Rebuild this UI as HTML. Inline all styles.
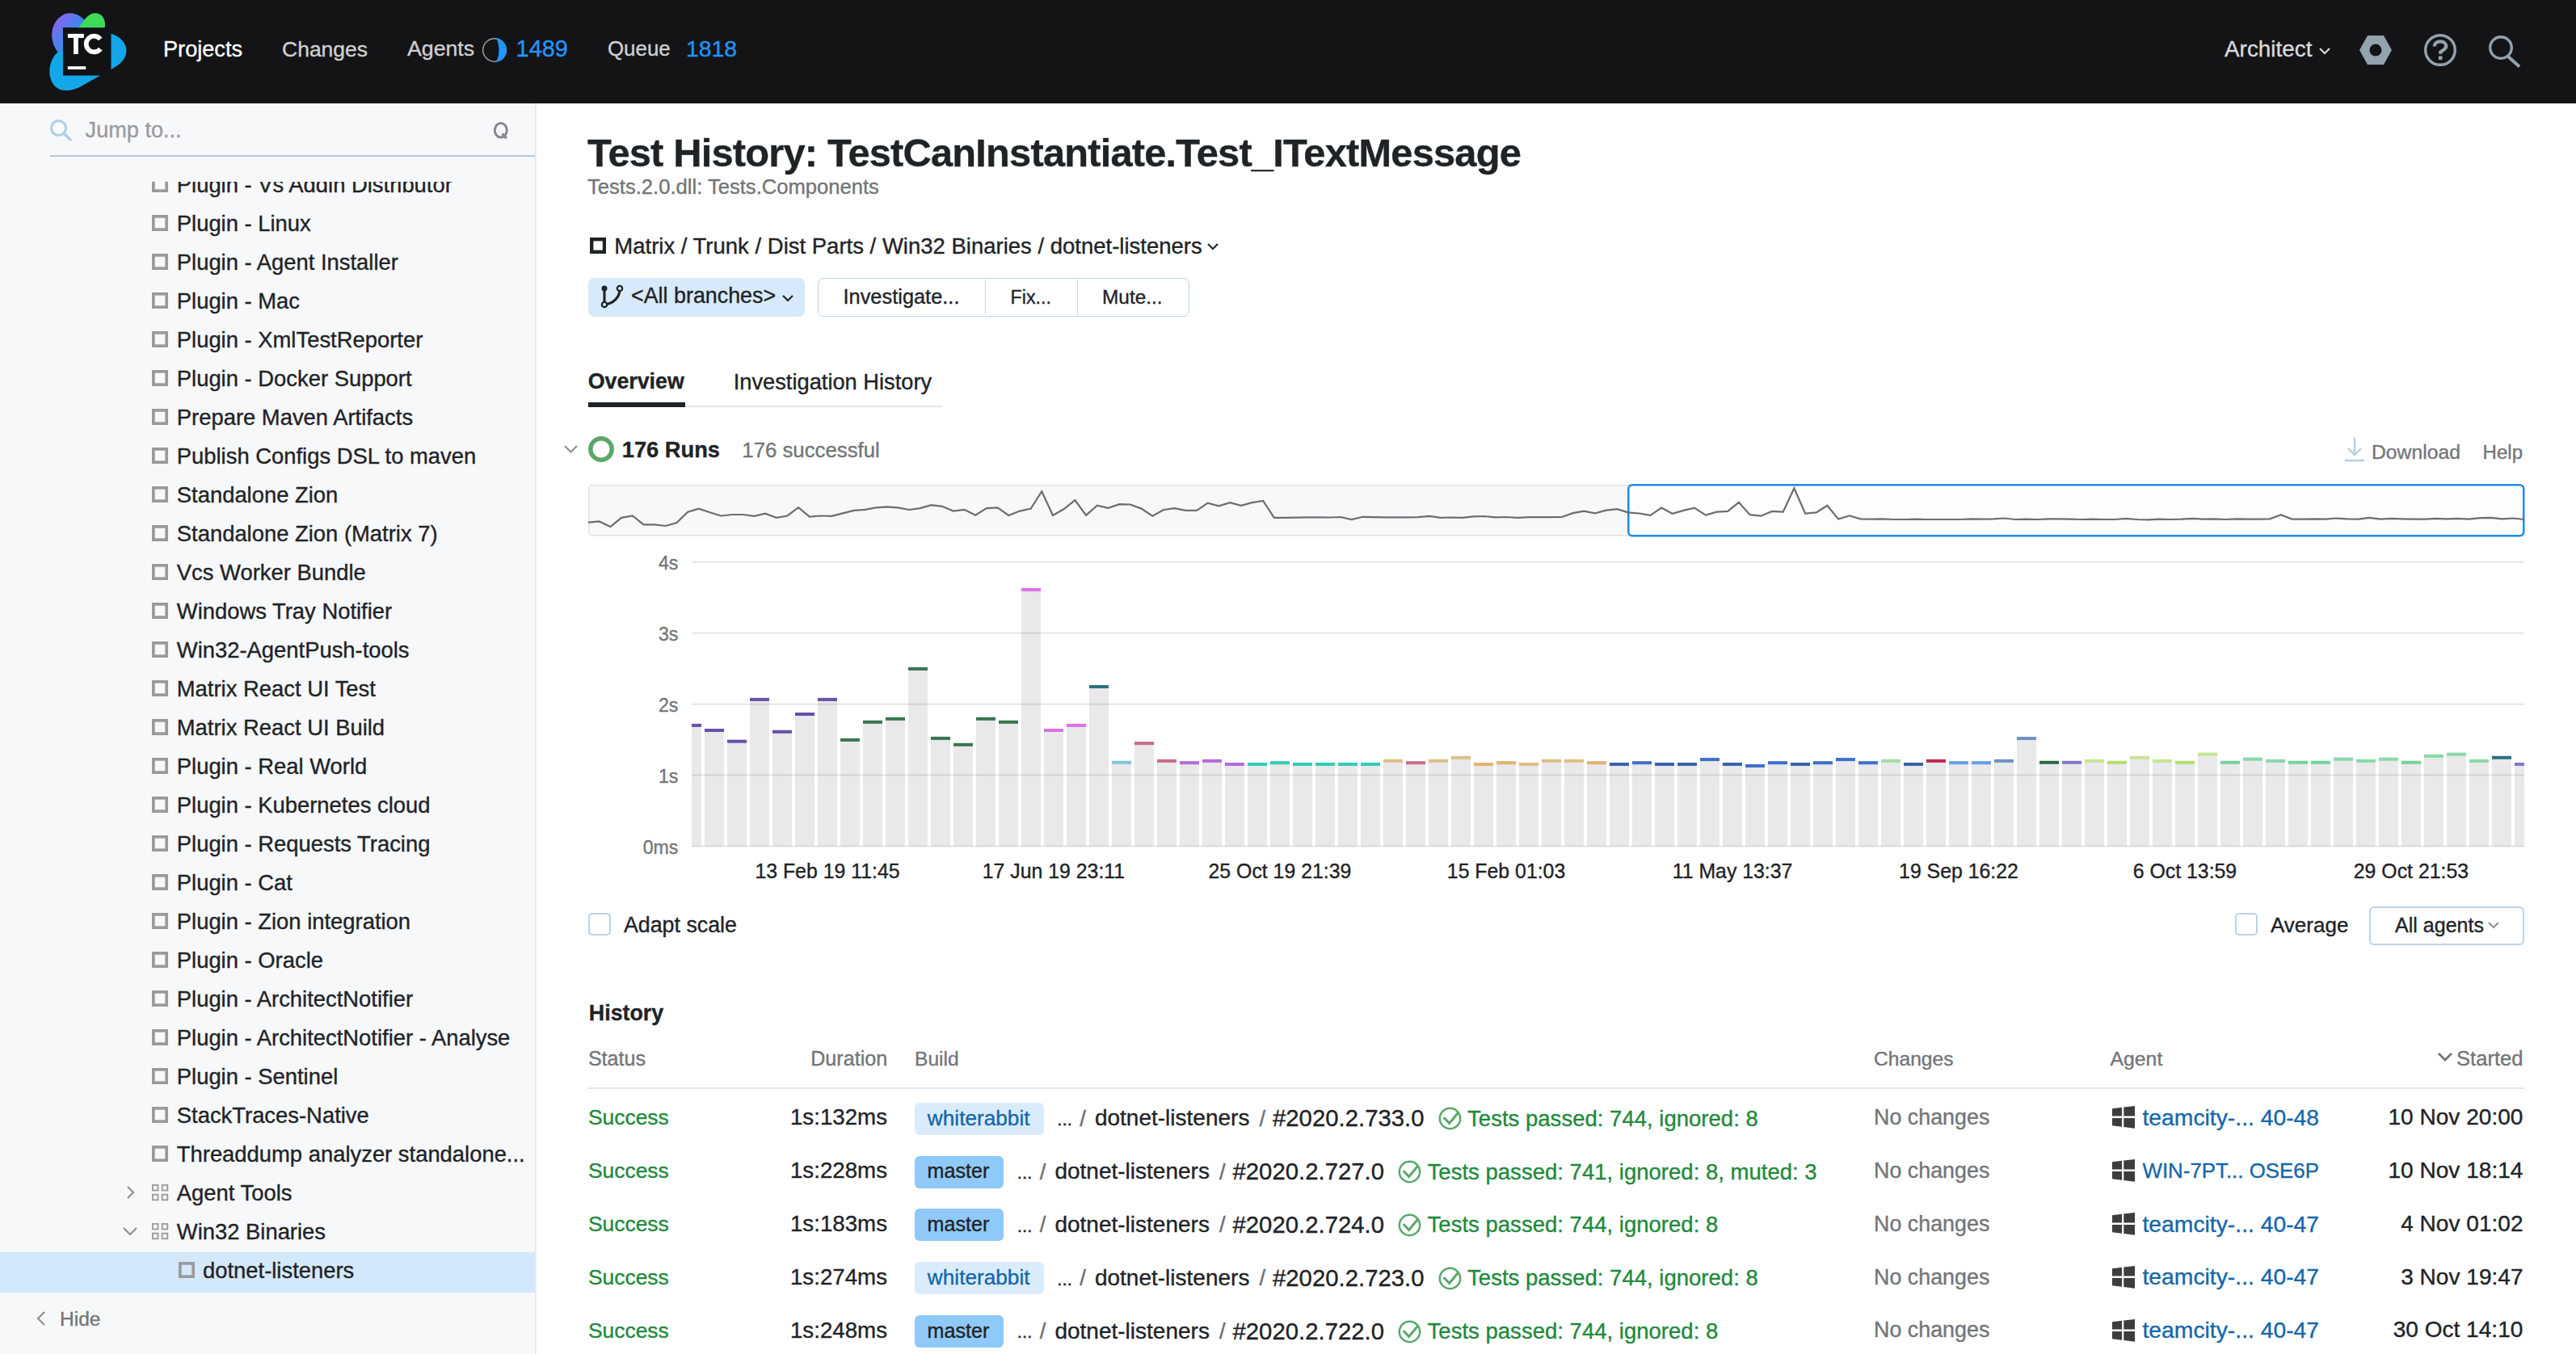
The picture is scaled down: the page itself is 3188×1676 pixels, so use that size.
<!DOCTYPE html>
<html><head><meta charset="utf-8"><style>
html,body{margin:0;padding:0;width:3188px;height:1676px;overflow:hidden;background:#ffffff;position:relative}
.t{position:absolute;white-space:nowrap;font-family:"Liberation Sans",sans-serif;-webkit-text-stroke:0.35px currentColor}
svg{display:block}
</style></head><body>
<div style="position:absolute;left:0px;top:0px;width:3188px;height:128px;background:#141417"></div>
<svg style="position:absolute;left:40px;top:0px" width="140" height="127" viewBox="0 0 140 127">
<defs><linearGradient id="lg1" x1="0" y1="0" x2="1" y2="1"><stop offset="0" stop-color="#a35ae8"/><stop offset="0.55" stop-color="#3b87f0"/><stop offset="1" stop-color="#19a0ec"/></linearGradient></defs>
<g transform="scale(0.09377 0.0938)">
<path d="M340 690 C230 560 210 300 420 190 C540 140 650 210 720 300 L640 365 L405 365 L405 700 Z" fill="url(#lg1)"/>
<path d="M610 370 C680 260 740 172 830 172 C935 172 975 280 955 370 Z" fill="#3ddc58"/>
<path d="M345 680 C220 780 180 1010 300 1140 C400 1235 560 1190 660 1130 L900 995 L405 995 L405 680 Z" fill="#12a7e8"/>
<path d="M1040 445 C1190 490 1265 610 1235 720 C1205 820 1110 880 1040 915 Z" fill="#12a7e8"/>
<rect x="405" y="365" width="620" height="630" fill="#121214"/>
</g>
<rect x="43.8" y="41.9" width="20.1" height="5" fill="#fff"/>
<rect x="51" y="41.9" width="5.8" height="25.1" fill="#fff"/>
<path d="M84.22 48.47 A9.8 9.8 0 1 0 84.33 60.4" fill="none" stroke="#fff" stroke-width="5.8"/>
<rect x="43.8" y="82.1" width="22.4" height="3.8" fill="#fff"/>
</svg>
<div class="t" style="left:202.00px;top:47.02px;font-size:27.15px;line-height:27.15px;font-weight:400;color:#ffffff;">Projects</div>
<div class="t" style="left:349.00px;top:47.57px;font-size:26.5px;line-height:26.5px;font-weight:400;color:#cfd0d3;">Changes</div>
<div class="t" style="left:504.00px;top:47.41px;font-size:26.69px;line-height:26.69px;font-weight:400;color:#cfd0d3;">Agents</div>
<svg style="position:absolute;left:596px;top:46px" width="32" height="32" viewBox="0 0 32 32"><circle cx="16" cy="16" r="14.3" fill="none" stroke="#a3a3a6" stroke-width="1.4"/><path d="M16 1 A15 15 0 0 1 16 31 A5.5 15 0 0 0 16 1 Z" fill="#2196f8"/></svg>
<div class="t" style="left:638.60px;top:45.60px;font-size:28.83px;line-height:28.83px;font-weight:400;color:#2196f8;">1489</div>
<div class="t" style="left:752.00px;top:48.10px;font-size:25.87px;line-height:25.87px;font-weight:400;color:#cfd0d3;">Queue</div>
<div class="t" style="left:849.00px;top:45.98px;font-size:28.38px;line-height:28.38px;font-weight:400;color:#2196f8;">1818</div>
<div class="t" style="left:2753.00px;top:47.39px;font-size:27.89px;line-height:27.89px;font-weight:400;color:#d9dadc;">Architect</div>
<svg style="position:absolute;left:2868px;top:56px" width="18" height="14" viewBox="0 0 18 14"><path d="M3 4 L9 10 L15 4" fill="none" stroke="#d9dadc" stroke-width="2.2"/></svg>
<svg style="position:absolute;left:2918px;top:42px" width="44" height="40" viewBox="0 0 44 40"><path d="M12 2 H32 L42 20 L32 38 H12 L2 20 Z" fill="#93a2ad"/><circle cx="22" cy="20" r="7.5" fill="#141416"/></svg>
<svg style="position:absolute;left:2998px;top:41px" width="44" height="44" viewBox="0 0 44 44"><circle cx="22" cy="21" r="18.3" fill="none" stroke="#93a2ad" stroke-width="3.4"/><path d="M14.8 16.6 C14.8 12.6 18 10.3 22.1 10.3 C26.3 10.3 29.3 13 29.3 16.3 C29.3 20 24.6 21.2 22.3 23.5 V25.8" fill="none" stroke="#93a2ad" stroke-width="4.3"/><rect x="19.9" y="28.4" width="4.6" height="4.6" fill="#93a2ad"/></svg>
<svg style="position:absolute;left:3076px;top:41px" width="46" height="46" viewBox="0 0 46 46"><circle cx="19" cy="18" r="13.3" fill="none" stroke="#93a2ad" stroke-width="3.4"/><path d="M28 29 L42 41.5" stroke="#93a2ad" stroke-width="4"/></svg>
<div style="position:absolute;left:0px;top:128px;width:662px;height:1548px;background:#f7f8fa"></div>
<div style="position:absolute;left:662px;top:128px;width:2px;height:1548px;background:#e9eaec"></div>
<svg style="position:absolute;left:60px;top:146px" width="32" height="32" viewBox="0 0 32 32"><circle cx="12.5" cy="12.5" r="9" fill="none" stroke="#b0cde5" stroke-width="3"/><path d="M19 19 L28 28" stroke="#b0cde5" stroke-width="3.5"/></svg>
<div class="t" style="left:105.60px;top:146.85px;font-size:27.11px;line-height:27.11px;font-weight:400;color:#9a9ba0;">Jump to...</div>
<svg style="position:absolute;left:608px;top:148px" width="24" height="28" viewBox="0 0 24 28"><ellipse cx="11.8" cy="13.2" rx="7.5" ry="8.8" fill="none" stroke="#88898e" stroke-width="3"/><path d="M13.5 17.5 L18.8 23.2" stroke="#88898e" stroke-width="3.2"/></svg>
<div style="position:absolute;left:62px;top:192px;width:600px;height:2px;background:#b3c8db"></div>
<div style="position:absolute;left:0;top:225px;width:662px;height:1451px;overflow:hidden">
<div style="position:absolute;left:0px;top:1325px;width:662px;height:50px;background:#d4e8fb"></div>
<svg style="position:absolute;left:188px;top:-7px" width="20" height="20" viewBox="0 0 20 20"><rect x="1.85" y="1.85" width="16.3" height="16.3" fill="none" stroke="#9a9a9c" stroke-width="3.7"/></svg>
<div class="t" style="left:218.80px;top:-10.24px;font-size:27.4px;line-height:27.4px;font-weight:400;color:#1f2326;">Plugin - Vs Addin Distributor</div>
<svg style="position:absolute;left:188px;top:41px" width="20" height="20" viewBox="0 0 20 20"><rect x="1.85" y="1.85" width="16.3" height="16.3" fill="none" stroke="#9a9a9c" stroke-width="3.7"/></svg>
<div class="t" style="left:218.80px;top:37.76px;font-size:27.4px;line-height:27.4px;font-weight:400;color:#1f2326;">Plugin - Linux</div>
<svg style="position:absolute;left:188px;top:89px" width="20" height="20" viewBox="0 0 20 20"><rect x="1.85" y="1.85" width="16.3" height="16.3" fill="none" stroke="#9a9a9c" stroke-width="3.7"/></svg>
<div class="t" style="left:218.80px;top:85.76px;font-size:27.4px;line-height:27.4px;font-weight:400;color:#1f2326;">Plugin - Agent Installer</div>
<svg style="position:absolute;left:188px;top:137px" width="20" height="20" viewBox="0 0 20 20"><rect x="1.85" y="1.85" width="16.3" height="16.3" fill="none" stroke="#9a9a9c" stroke-width="3.7"/></svg>
<div class="t" style="left:218.80px;top:133.76px;font-size:27.4px;line-height:27.4px;font-weight:400;color:#1f2326;">Plugin - Mac</div>
<svg style="position:absolute;left:188px;top:185px" width="20" height="20" viewBox="0 0 20 20"><rect x="1.85" y="1.85" width="16.3" height="16.3" fill="none" stroke="#9a9a9c" stroke-width="3.7"/></svg>
<div class="t" style="left:218.80px;top:181.76px;font-size:27.4px;line-height:27.4px;font-weight:400;color:#1f2326;">Plugin - XmlTestReporter</div>
<svg style="position:absolute;left:188px;top:233px" width="20" height="20" viewBox="0 0 20 20"><rect x="1.85" y="1.85" width="16.3" height="16.3" fill="none" stroke="#9a9a9c" stroke-width="3.7"/></svg>
<div class="t" style="left:218.80px;top:229.76px;font-size:27.4px;line-height:27.4px;font-weight:400;color:#1f2326;">Plugin - Docker Support</div>
<svg style="position:absolute;left:188px;top:281px" width="20" height="20" viewBox="0 0 20 20"><rect x="1.85" y="1.85" width="16.3" height="16.3" fill="none" stroke="#9a9a9c" stroke-width="3.7"/></svg>
<div class="t" style="left:218.80px;top:277.76px;font-size:27.4px;line-height:27.4px;font-weight:400;color:#1f2326;">Prepare Maven Artifacts</div>
<svg style="position:absolute;left:188px;top:329px" width="20" height="20" viewBox="0 0 20 20"><rect x="1.85" y="1.85" width="16.3" height="16.3" fill="none" stroke="#9a9a9c" stroke-width="3.7"/></svg>
<div class="t" style="left:218.80px;top:325.76px;font-size:27.4px;line-height:27.4px;font-weight:400;color:#1f2326;">Publish Configs DSL to maven</div>
<svg style="position:absolute;left:188px;top:377px" width="20" height="20" viewBox="0 0 20 20"><rect x="1.85" y="1.85" width="16.3" height="16.3" fill="none" stroke="#9a9a9c" stroke-width="3.7"/></svg>
<div class="t" style="left:218.80px;top:373.76px;font-size:27.4px;line-height:27.4px;font-weight:400;color:#1f2326;">Standalone Zion</div>
<svg style="position:absolute;left:188px;top:425px" width="20" height="20" viewBox="0 0 20 20"><rect x="1.85" y="1.85" width="16.3" height="16.3" fill="none" stroke="#9a9a9c" stroke-width="3.7"/></svg>
<div class="t" style="left:218.80px;top:421.76px;font-size:27.4px;line-height:27.4px;font-weight:400;color:#1f2326;">Standalone Zion (Matrix 7)</div>
<svg style="position:absolute;left:188px;top:473px" width="20" height="20" viewBox="0 0 20 20"><rect x="1.85" y="1.85" width="16.3" height="16.3" fill="none" stroke="#9a9a9c" stroke-width="3.7"/></svg>
<div class="t" style="left:218.80px;top:469.76px;font-size:27.4px;line-height:27.4px;font-weight:400;color:#1f2326;">Vcs Worker Bundle</div>
<svg style="position:absolute;left:188px;top:521px" width="20" height="20" viewBox="0 0 20 20"><rect x="1.85" y="1.85" width="16.3" height="16.3" fill="none" stroke="#9a9a9c" stroke-width="3.7"/></svg>
<div class="t" style="left:218.80px;top:517.76px;font-size:27.4px;line-height:27.4px;font-weight:400;color:#1f2326;">Windows Tray Notifier</div>
<svg style="position:absolute;left:188px;top:569px" width="20" height="20" viewBox="0 0 20 20"><rect x="1.85" y="1.85" width="16.3" height="16.3" fill="none" stroke="#9a9a9c" stroke-width="3.7"/></svg>
<div class="t" style="left:218.80px;top:565.76px;font-size:27.4px;line-height:27.4px;font-weight:400;color:#1f2326;">Win32-AgentPush-tools</div>
<svg style="position:absolute;left:188px;top:617px" width="20" height="20" viewBox="0 0 20 20"><rect x="1.85" y="1.85" width="16.3" height="16.3" fill="none" stroke="#9a9a9c" stroke-width="3.7"/></svg>
<div class="t" style="left:218.80px;top:613.76px;font-size:27.4px;line-height:27.4px;font-weight:400;color:#1f2326;">Matrix React UI Test</div>
<svg style="position:absolute;left:188px;top:665px" width="20" height="20" viewBox="0 0 20 20"><rect x="1.85" y="1.85" width="16.3" height="16.3" fill="none" stroke="#9a9a9c" stroke-width="3.7"/></svg>
<div class="t" style="left:218.80px;top:661.76px;font-size:27.4px;line-height:27.4px;font-weight:400;color:#1f2326;">Matrix React UI Build</div>
<svg style="position:absolute;left:188px;top:713px" width="20" height="20" viewBox="0 0 20 20"><rect x="1.85" y="1.85" width="16.3" height="16.3" fill="none" stroke="#9a9a9c" stroke-width="3.7"/></svg>
<div class="t" style="left:218.80px;top:709.76px;font-size:27.4px;line-height:27.4px;font-weight:400;color:#1f2326;">Plugin - Real World</div>
<svg style="position:absolute;left:188px;top:761px" width="20" height="20" viewBox="0 0 20 20"><rect x="1.85" y="1.85" width="16.3" height="16.3" fill="none" stroke="#9a9a9c" stroke-width="3.7"/></svg>
<div class="t" style="left:218.80px;top:757.76px;font-size:27.4px;line-height:27.4px;font-weight:400;color:#1f2326;">Plugin - Kubernetes cloud</div>
<svg style="position:absolute;left:188px;top:809px" width="20" height="20" viewBox="0 0 20 20"><rect x="1.85" y="1.85" width="16.3" height="16.3" fill="none" stroke="#9a9a9c" stroke-width="3.7"/></svg>
<div class="t" style="left:218.80px;top:805.76px;font-size:27.4px;line-height:27.4px;font-weight:400;color:#1f2326;">Plugin - Requests Tracing</div>
<svg style="position:absolute;left:188px;top:857px" width="20" height="20" viewBox="0 0 20 20"><rect x="1.85" y="1.85" width="16.3" height="16.3" fill="none" stroke="#9a9a9c" stroke-width="3.7"/></svg>
<div class="t" style="left:218.80px;top:853.76px;font-size:27.4px;line-height:27.4px;font-weight:400;color:#1f2326;">Plugin - Cat</div>
<svg style="position:absolute;left:188px;top:905px" width="20" height="20" viewBox="0 0 20 20"><rect x="1.85" y="1.85" width="16.3" height="16.3" fill="none" stroke="#9a9a9c" stroke-width="3.7"/></svg>
<div class="t" style="left:218.80px;top:901.76px;font-size:27.4px;line-height:27.4px;font-weight:400;color:#1f2326;">Plugin - Zion integration</div>
<svg style="position:absolute;left:188px;top:953px" width="20" height="20" viewBox="0 0 20 20"><rect x="1.85" y="1.85" width="16.3" height="16.3" fill="none" stroke="#9a9a9c" stroke-width="3.7"/></svg>
<div class="t" style="left:218.80px;top:949.76px;font-size:27.4px;line-height:27.4px;font-weight:400;color:#1f2326;">Plugin - Oracle</div>
<svg style="position:absolute;left:188px;top:1001px" width="20" height="20" viewBox="0 0 20 20"><rect x="1.85" y="1.85" width="16.3" height="16.3" fill="none" stroke="#9a9a9c" stroke-width="3.7"/></svg>
<div class="t" style="left:218.80px;top:997.76px;font-size:27.4px;line-height:27.4px;font-weight:400;color:#1f2326;">Plugin - ArchitectNotifier</div>
<svg style="position:absolute;left:188px;top:1049px" width="20" height="20" viewBox="0 0 20 20"><rect x="1.85" y="1.85" width="16.3" height="16.3" fill="none" stroke="#9a9a9c" stroke-width="3.7"/></svg>
<div class="t" style="left:218.80px;top:1045.76px;font-size:27.4px;line-height:27.4px;font-weight:400;color:#1f2326;">Plugin - ArchitectNotifier - Analyse</div>
<svg style="position:absolute;left:188px;top:1097px" width="20" height="20" viewBox="0 0 20 20"><rect x="1.85" y="1.85" width="16.3" height="16.3" fill="none" stroke="#9a9a9c" stroke-width="3.7"/></svg>
<div class="t" style="left:218.80px;top:1093.76px;font-size:27.4px;line-height:27.4px;font-weight:400;color:#1f2326;">Plugin - Sentinel</div>
<svg style="position:absolute;left:188px;top:1145px" width="20" height="20" viewBox="0 0 20 20"><rect x="1.85" y="1.85" width="16.3" height="16.3" fill="none" stroke="#9a9a9c" stroke-width="3.7"/></svg>
<div class="t" style="left:218.80px;top:1141.76px;font-size:27.4px;line-height:27.4px;font-weight:400;color:#1f2326;">StackTraces-Native</div>
<svg style="position:absolute;left:188px;top:1193px" width="20" height="20" viewBox="0 0 20 20"><rect x="1.85" y="1.85" width="16.3" height="16.3" fill="none" stroke="#9a9a9c" stroke-width="3.7"/></svg>
<div class="t" style="left:218.80px;top:1189.76px;font-size:27.4px;line-height:27.4px;font-weight:400;color:#1f2326;">Threaddump analyzer standalone...</div>
<svg style="position:absolute;left:152px;top:1241px" width="20" height="20" viewBox="0 0 20 20"><path d="M6 3 L13 10 L6 17" fill="none" stroke="#8f9092" stroke-width="2.2"/></svg>
<svg style="position:absolute;left:188px;top:1241px" width="21" height="21" viewBox="0 0 21 21"><g fill="none" stroke="#9a9a9c" stroke-width="1.8"><rect x="0.9" y="0.9" width="6.6" height="6.6"/><rect x="12.7" y="0.9" width="6.6" height="6.6"/><rect x="0.9" y="12.7" width="6.6" height="6.6"/><rect x="12.7" y="12.7" width="6.6" height="6.6"/></g></svg>
<div class="t" style="left:218.80px;top:1237.76px;font-size:27.4px;line-height:27.4px;font-weight:400;color:#1f2326;">Agent Tools</div>
<svg style="position:absolute;left:150px;top:1289px" width="22" height="20" viewBox="0 0 22 20"><path d="M3 6 L11 14 L19 6" fill="none" stroke="#8f9092" stroke-width="2.2"/></svg>
<svg style="position:absolute;left:188px;top:1289px" width="21" height="21" viewBox="0 0 21 21"><g fill="none" stroke="#9a9a9c" stroke-width="1.8"><rect x="0.9" y="0.9" width="6.6" height="6.6"/><rect x="12.7" y="0.9" width="6.6" height="6.6"/><rect x="0.9" y="12.7" width="6.6" height="6.6"/><rect x="12.7" y="12.7" width="6.6" height="6.6"/></g></svg>
<div class="t" style="left:218.80px;top:1285.76px;font-size:27.4px;line-height:27.4px;font-weight:400;color:#1f2326;">Win32 Binaries</div>
<svg style="position:absolute;left:221px;top:1337px" width="20" height="20" viewBox="0 0 20 20"><rect x="1.85" y="1.85" width="16.3" height="16.3" fill="none" stroke="#9a9a9c" stroke-width="3.7"/></svg>
<div class="t" style="left:251.00px;top:1333.76px;font-size:27.4px;line-height:27.4px;font-weight:400;color:#1f2326;">dotnet-listeners</div>
</div>
<div style="position:absolute;left:0px;top:1600px;width:662px;height:76px;background:#f7f8fa"></div>
<svg style="position:absolute;left:42px;top:1621px" width="18" height="22" viewBox="0 0 18 22"><path d="M13 3 L5 11 L13 19" fill="none" stroke="#8f9092" stroke-width="2.2"/></svg>
<div class="t" style="left:74.00px;top:1620.71px;font-size:24.56px;line-height:24.56px;font-weight:400;color:#737577;">Hide</div>
<div class="t" style="left:727.00px;top:165.29px;font-size:48.8px;line-height:48.8px;font-weight:700;color:#1f2326;letter-spacing:-0.798px;">Test History: TestCanInstantiate.Test_ITextMessage</div>
<div class="t" style="left:727.00px;top:219.33px;font-size:25.6px;line-height:25.6px;font-weight:400;color:#737577;">Tests.2.0.dll: Tests.Components</div>
<svg style="position:absolute;left:730px;top:294.3px" width="20.2" height="20" viewBox="0 0 20.2 20"><rect x="2.2" y="2.2" width="15.8" height="15.6" fill="none" stroke="#1f2326" stroke-width="4.4"/></svg>
<div class="t" style="left:760.30px;top:290.92px;font-size:27.5px;line-height:27.5px;font-weight:400;color:#1f2326;">Matrix / Trunk / Dist Parts / Win32 Binaries / dotnet-listeners</div>
<svg style="position:absolute;left:1492px;top:298px" width="18" height="14" viewBox="0 0 18 14"><path d="M3 4 L9 10 L15 4" fill="none" stroke="#1f2326" stroke-width="2.2"/></svg>
<div style="position:absolute;left:728px;top:344px;width:268px;height:48px;background:#d6eafb;border-radius:7px"></div>
<svg style="position:absolute;left:743px;top:352px" width="30" height="30" viewBox="0 0 30 30"><g fill="none" stroke="#1f2326" stroke-width="3.1"><path d="M5 5 V25"/><path d="M24 6 C24 16 16 24 5 25"/></g><circle cx="5" cy="5" r="3.5" fill="#1f2326"/><circle cx="24" cy="5" r="3.2" fill="#d6eafb" stroke="#1f2326" stroke-width="2.2"/><circle cx="5" cy="25" r="3.2" fill="#d6eafb" stroke="#1f2326" stroke-width="2.2"/></svg>
<div class="t" style="left:781.00px;top:353.15px;font-size:26.87px;line-height:26.87px;font-weight:400;color:#1f2326;">&lt;All branches&gt;</div>
<svg style="position:absolute;left:966px;top:362px" width="18" height="14" viewBox="0 0 18 14"><path d="M3 4 L9 10 L15 4" fill="none" stroke="#1f2326" stroke-width="2.2"/></svg>
<div style="position:absolute;left:1012px;top:344px;width:460px;height:48px;box-sizing:border-box;border:1.6px solid #bcd1e6;border-radius:7px;background:#fff"></div>
<div style="position:absolute;left:1218.5px;top:346px;width:1.6px;height:44px;background:#c6d8ea"></div>
<div style="position:absolute;left:1332.5px;top:346px;width:1.6px;height:44px;background:#c6d8ea"></div>
<div class="t" style="left:1043.50px;top:354.80px;font-size:25.4px;line-height:25.4px;font-weight:400;color:#1f2326;">Investigate...</div>
<div class="t" style="left:1250.50px;top:356.60px;font-size:23.27px;line-height:23.27px;font-weight:400;color:#1f2326;">Fix...</div>
<div class="t" style="left:1364.00px;top:355.64px;font-size:24.41px;line-height:24.41px;font-weight:400;color:#1f2326;">Mute...</div>
<div class="t" style="left:727.70px;top:459.02px;font-size:26.79px;line-height:26.79px;font-weight:700;color:#1f2326;">Overview</div>
<div class="t" style="left:907.70px;top:458.61px;font-size:27.28px;line-height:27.28px;font-weight:400;color:#1f2326;">Investigation History</div>
<div style="position:absolute;left:728px;top:502px;width:438px;height:2px;background:#e6e7e9"></div>
<div style="position:absolute;left:728px;top:498px;width:120px;height:6px;background:#1f2326"></div>
<svg style="position:absolute;left:696px;top:548px" width="22" height="16" viewBox="0 0 22 16"><path d="M3 4 L10.5 11.5 L18 4" fill="none" stroke="#8f9092" stroke-width="2.2"/></svg>
<svg style="position:absolute;left:727px;top:539px" width="34" height="34" viewBox="0 0 34 34"><circle cx="17" cy="17" r="13.2" fill="none" stroke="#59a869" stroke-width="5.5"/></svg>
<div class="t" style="left:769.80px;top:542.71px;font-size:27.28px;line-height:27.28px;font-weight:700;color:#1f2326;">176 Runs</div>
<div class="t" style="left:918.30px;top:545.17px;font-size:25.79px;line-height:25.79px;font-weight:400;color:#737577;">176 successful</div>
<svg style="position:absolute;left:2899px;top:541px" width="30" height="32" viewBox="0 0 30 32"><g fill="none" stroke="#b3cde4" stroke-width="2.4"><path d="M15 0.5 V22"/><path d="M7 14 L15 22 L23 14"/><path d="M3 29 H27"/></g></svg>
<div class="t" style="left:2935.00px;top:547.57px;font-size:24.72px;line-height:24.72px;font-weight:400;color:#737577;">Download</div>
<div class="t" style="left:3072.60px;top:548.16px;font-size:24.03px;line-height:24.03px;font-weight:400;color:#737577;">Help</div>
<svg style="position:absolute;left:0;top:0" width="3188" height="1676" viewBox="0 0 3188 1676"><rect x="728.75" y="600.75" width="2394.5" height="62" rx="4" fill="#f7f8fa" stroke="#e1e2e5" stroke-width="1.5"/><rect x="2015.25" y="600.25" width="1108" height="63" rx="5" fill="#fdfdfe" stroke="#1f8ce6" stroke-width="2.5"/><polyline points="728.0,646.6 741.7,645.4 755.4,652.0 769.1,640.8 782.8,638.5 796.5,649.4 810.1,649.4 823.8,651.0 837.5,647.1 851.2,633.8 864.9,629.6 878.6,634.3 892.3,638.5 906.0,637.0 919.7,637.0 933.4,638.9 947.1,635.7 960.8,640.8 974.4,638.5 988.1,628.2 1001.8,639.6 1015.5,638.5 1029.2,638.9 1042.9,635.4 1056.6,631.9 1070.3,630.8 1084.0,628.4 1097.7,627.3 1111.4,628.4 1125.1,631.0 1138.7,629.1 1152.4,625.2 1166.1,626.8 1179.8,632.6 1193.5,630.8 1207.2,637.8 1220.9,629.1 1234.6,628.4 1248.3,638.0 1262.0,632.6 1275.7,629.6 1289.3,608.2 1303.0,638.0 1316.7,630.0 1330.4,619.1 1344.1,637.8 1357.8,625.6 1371.5,628.9 1385.2,624.2 1398.9,624.5 1412.6,629.6 1426.3,638.7 1440.0,631.0 1453.6,629.1 1467.3,631.9 1481.0,631.9 1494.7,622.6 1508.4,626.3 1522.1,622.1 1535.8,625.9 1549.5,622.1 1563.2,620.0 1576.9,640.8 1590.6,640.8 1604.3,640.6 1617.9,640.4 1631.6,640.3 1645.3,640.5 1659.0,640.0 1672.7,643.1 1686.4,639.8 1700.1,640.2 1713.8,640.3 1727.5,640.3 1741.2,640.3 1754.9,640.2 1768.5,638.8 1782.2,640.8 1795.9,640.5 1809.6,640.8 1823.3,639.4 1837.0,639.0 1850.7,640.4 1864.4,640.0 1878.1,640.8 1891.8,640.2 1905.5,640.2 1919.2,640.2 1932.8,640.0 1946.5,635.1 1960.2,632.6 1973.9,635.3 1987.6,631.6 2001.3,630.1 2015.0,634.4 2028.7,635.5 2042.4,637.9 2056.1,628.6 2069.8,635.8 2083.5,631.9 2097.1,628.6 2110.8,637.6 2124.5,633.6 2138.2,632.9 2151.9,621.8 2165.6,637.2 2179.3,638.7 2193.0,632.9 2206.7,633.6 2220.4,604.2 2234.1,635.5 2247.7,634.4 2261.4,625.8 2275.1,642.6 2288.8,638.3 2302.5,642.3 2316.2,642.7 2329.9,642.3 2343.6,643.0 2357.3,643.0 2371.0,642.7 2384.7,643.0 2398.4,643.0 2412.0,643.0 2425.7,643.0 2439.4,642.3 2453.1,642.7 2466.8,642.3 2480.5,641.5 2494.2,643.0 2507.9,642.7 2521.6,643.0 2535.3,642.3 2549.0,642.3 2562.7,642.7 2576.3,643.0 2590.0,642.7 2603.7,643.0 2617.4,643.0 2631.1,641.9 2644.8,643.0 2658.5,643.4 2672.2,642.7 2685.9,643.0 2699.6,642.7 2713.3,641.9 2726.9,642.7 2740.6,642.3 2754.3,643.0 2768.0,642.3 2781.7,642.7 2795.4,642.7 2809.1,642.3 2822.8,637.3 2836.5,642.6 2850.2,642.6 2863.9,642.3 2877.6,642.6 2891.2,641.5 2904.9,642.3 2918.6,642.6 2932.3,640.8 2946.0,642.6 2959.7,641.9 2973.4,642.3 2987.1,642.6 3000.8,642.6 3014.5,641.9 3028.2,642.3 3041.9,641.9 3055.5,642.6 3069.2,641.2 3082.9,640.8 3096.6,642.3 3110.3,641.5 3124.0,643.0" fill="none" stroke="#6d6d70" stroke-width="2.2" stroke-linejoin="miter"/><defs><clipPath id="cc"><rect x="856" y="600" width="2268" height="460"/></clipPath></defs><g clip-path="url(#cc)"><rect x="844" y="895.9" width="24" height="151.7" fill="#e9e8eb"/><rect x="844" y="895.9" width="24" height="4" fill="#6750a8"/><rect x="872" y="902.0" width="24" height="145.6" fill="#e9e8eb"/><rect x="872" y="902.0" width="24" height="4" fill="#6750a8"/><rect x="900" y="915.7" width="24" height="131.9" fill="#e9e8eb"/><rect x="900" y="915.7" width="24" height="4" fill="#6750a8"/><rect x="928" y="863.9" width="24" height="183.7" fill="#e9e8eb"/><rect x="928" y="863.9" width="24" height="4" fill="#6750a8"/><rect x="956" y="903.8" width="24" height="143.8" fill="#e9e8eb"/><rect x="956" y="903.8" width="24" height="4" fill="#6750a8"/><rect x="984" y="882.0" width="24" height="165.6" fill="#e9e8eb"/><rect x="984" y="882.0" width="24" height="4" fill="#6750a8"/><rect x="1012" y="863.9" width="24" height="183.7" fill="#e9e8eb"/><rect x="1012" y="863.9" width="24" height="4" fill="#6750a8"/><rect x="1040" y="913.9" width="24" height="133.7" fill="#e9e8eb"/><rect x="1040" y="913.9" width="24" height="4" fill="#3b7550"/><rect x="1068" y="891.8" width="24" height="155.8" fill="#e9e8eb"/><rect x="1068" y="891.8" width="24" height="4" fill="#3b7550"/><rect x="1096" y="887.8" width="24" height="159.8" fill="#e9e8eb"/><rect x="1096" y="887.8" width="24" height="4" fill="#3b7550"/><rect x="1124" y="825.9" width="24" height="221.7" fill="#e9e8eb"/><rect x="1124" y="825.9" width="24" height="4" fill="#3b7550"/><rect x="1152" y="911.9" width="24" height="135.7" fill="#e9e8eb"/><rect x="1152" y="911.9" width="24" height="4" fill="#3b7550"/><rect x="1180" y="919.8" width="24" height="127.8" fill="#e9e8eb"/><rect x="1180" y="919.8" width="24" height="4" fill="#3b7550"/><rect x="1208" y="887.8" width="24" height="159.8" fill="#e9e8eb"/><rect x="1208" y="887.8" width="24" height="4" fill="#3b7550"/><rect x="1236" y="891.8" width="24" height="155.8" fill="#e9e8eb"/><rect x="1236" y="891.8" width="24" height="4" fill="#3b7550"/><rect x="1264" y="727.9" width="24" height="319.7" fill="#e9e8eb"/><rect x="1264" y="727.9" width="24" height="4" fill="#df6fe8"/><rect x="1292" y="902.0" width="24" height="145.6" fill="#e9e8eb"/><rect x="1292" y="902.0" width="24" height="4" fill="#df6fe8"/><rect x="1320" y="895.9" width="24" height="151.7" fill="#e9e8eb"/><rect x="1320" y="895.9" width="24" height="4" fill="#df6fe8"/><rect x="1348" y="848.0" width="24" height="199.6" fill="#e9e8eb"/><rect x="1348" y="848.0" width="24" height="4" fill="#2c6e80"/><rect x="1376" y="941.8" width="24" height="105.8" fill="#e9e8eb"/><rect x="1376" y="941.8" width="24" height="4" fill="#80c9dc"/><rect x="1404" y="918.1" width="24" height="129.5" fill="#e9e8eb"/><rect x="1404" y="918.1" width="24" height="4" fill="#cc6b8a"/><rect x="1432" y="939.9" width="24" height="107.7" fill="#e9e8eb"/><rect x="1432" y="939.9" width="24" height="4" fill="#cc6b8a"/><rect x="1460" y="942.2" width="24" height="105.4" fill="#e9e8eb"/><rect x="1460" y="942.2" width="24" height="4" fill="#b46cd8"/><rect x="1488" y="939.9" width="24" height="107.7" fill="#e9e8eb"/><rect x="1488" y="939.9" width="24" height="4" fill="#b46cd8"/><rect x="1516" y="944.0" width="24" height="103.6" fill="#e9e8eb"/><rect x="1516" y="944.0" width="24" height="4" fill="#b46cd8"/><rect x="1544" y="944.0" width="24" height="103.6" fill="#e9e8eb"/><rect x="1544" y="944.0" width="24" height="4" fill="#30cdb4"/><rect x="1572" y="942.2" width="24" height="105.4" fill="#e9e8eb"/><rect x="1572" y="942.2" width="24" height="4" fill="#30cdb4"/><rect x="1600" y="944.0" width="24" height="103.6" fill="#e9e8eb"/><rect x="1600" y="944.0" width="24" height="4" fill="#30cdb4"/><rect x="1628" y="944.0" width="24" height="103.6" fill="#e9e8eb"/><rect x="1628" y="944.0" width="24" height="4" fill="#30cdb4"/><rect x="1656" y="944.0" width="24" height="103.6" fill="#e9e8eb"/><rect x="1656" y="944.0" width="24" height="4" fill="#30cdb4"/><rect x="1684" y="944.0" width="24" height="103.6" fill="#e9e8eb"/><rect x="1684" y="944.0" width="24" height="4" fill="#30cdb4"/><rect x="1712" y="939.9" width="24" height="107.7" fill="#e9e8eb"/><rect x="1712" y="939.9" width="24" height="4" fill="#dcc088"/><rect x="1740" y="942.2" width="24" height="105.4" fill="#e9e8eb"/><rect x="1740" y="942.2" width="24" height="4" fill="#cc6b8a"/><rect x="1768" y="939.9" width="24" height="107.7" fill="#e9e8eb"/><rect x="1768" y="939.9" width="24" height="4" fill="#dcc088"/><rect x="1796" y="935.9" width="24" height="111.7" fill="#e9e8eb"/><rect x="1796" y="935.9" width="24" height="4" fill="#dcc088"/><rect x="1824" y="944.0" width="24" height="103.6" fill="#e9e8eb"/><rect x="1824" y="944.0" width="24" height="4" fill="#e0b472"/><rect x="1852" y="942.2" width="24" height="105.4" fill="#e9e8eb"/><rect x="1852" y="942.2" width="24" height="4" fill="#e0b472"/><rect x="1880" y="944.0" width="24" height="103.6" fill="#e9e8eb"/><rect x="1880" y="944.0" width="24" height="4" fill="#dcc088"/><rect x="1908" y="939.9" width="24" height="107.7" fill="#e9e8eb"/><rect x="1908" y="939.9" width="24" height="4" fill="#dcc088"/><rect x="1936" y="939.9" width="24" height="107.7" fill="#e9e8eb"/><rect x="1936" y="939.9" width="24" height="4" fill="#dcc088"/><rect x="1964" y="942.2" width="24" height="105.4" fill="#e9e8eb"/><rect x="1964" y="942.2" width="24" height="4" fill="#e0b472"/><rect x="1992" y="944.0" width="24" height="103.6" fill="#e9e8eb"/><rect x="1992" y="944.0" width="24" height="4" fill="#3b63ad"/><rect x="2020" y="942.2" width="24" height="105.4" fill="#e9e8eb"/><rect x="2020" y="942.2" width="24" height="4" fill="#4070cc"/><rect x="2048" y="944.0" width="24" height="103.6" fill="#e9e8eb"/><rect x="2048" y="944.0" width="24" height="4" fill="#3b63ad"/><rect x="2076" y="944.0" width="24" height="103.6" fill="#e9e8eb"/><rect x="2076" y="944.0" width="24" height="4" fill="#3b63ad"/><rect x="2104" y="938.1" width="24" height="109.5" fill="#e9e8eb"/><rect x="2104" y="938.1" width="24" height="4" fill="#4070cc"/><rect x="2132" y="944.0" width="24" height="103.6" fill="#e9e8eb"/><rect x="2132" y="944.0" width="24" height="4" fill="#3b63ad"/><rect x="2160" y="946.0" width="24" height="101.6" fill="#e9e8eb"/><rect x="2160" y="946.0" width="24" height="4" fill="#4070cc"/><rect x="2188" y="942.2" width="24" height="105.4" fill="#e9e8eb"/><rect x="2188" y="942.2" width="24" height="4" fill="#4070cc"/><rect x="2216" y="944.0" width="24" height="103.6" fill="#e9e8eb"/><rect x="2216" y="944.0" width="24" height="4" fill="#3b63ad"/><rect x="2244" y="942.2" width="24" height="105.4" fill="#e9e8eb"/><rect x="2244" y="942.2" width="24" height="4" fill="#4070cc"/><rect x="2272" y="938.1" width="24" height="109.5" fill="#e9e8eb"/><rect x="2272" y="938.1" width="24" height="4" fill="#4070cc"/><rect x="2300" y="942.2" width="24" height="105.4" fill="#e9e8eb"/><rect x="2300" y="942.2" width="24" height="4" fill="#4070cc"/><rect x="2328" y="939.9" width="24" height="107.7" fill="#e9e8eb"/><rect x="2328" y="939.9" width="24" height="4" fill="#a6dca0"/><rect x="2356" y="944.0" width="24" height="103.6" fill="#e9e8eb"/><rect x="2356" y="944.0" width="24" height="4" fill="#3b63ad"/><rect x="2384" y="939.9" width="24" height="107.7" fill="#e9e8eb"/><rect x="2384" y="939.9" width="24" height="4" fill="#c3284f"/><rect x="2412" y="942.2" width="24" height="105.4" fill="#e9e8eb"/><rect x="2412" y="942.2" width="24" height="4" fill="#6a9ee6"/><rect x="2440" y="942.2" width="24" height="105.4" fill="#e9e8eb"/><rect x="2440" y="942.2" width="24" height="4" fill="#6a9ee6"/><rect x="2468" y="939.9" width="24" height="107.7" fill="#e9e8eb"/><rect x="2468" y="939.9" width="24" height="4" fill="#7090c8"/><rect x="2496" y="912.0" width="24" height="135.6" fill="#e9e8eb"/><rect x="2496" y="912.0" width="24" height="4" fill="#7090c8"/><rect x="2524" y="941.8" width="24" height="105.8" fill="#e9e8eb"/><rect x="2524" y="941.8" width="24" height="4" fill="#2b6b45"/><rect x="2552" y="941.8" width="24" height="105.8" fill="#e9e8eb"/><rect x="2552" y="941.8" width="24" height="4" fill="#8577cc"/><rect x="2580" y="939.9" width="24" height="107.7" fill="#e9e8eb"/><rect x="2580" y="939.9" width="24" height="4" fill="#c5e690"/><rect x="2608" y="941.8" width="24" height="105.8" fill="#e9e8eb"/><rect x="2608" y="941.8" width="24" height="4" fill="#b2df6a"/><rect x="2636" y="935.8" width="24" height="111.8" fill="#e9e8eb"/><rect x="2636" y="935.8" width="24" height="4" fill="#c5e690"/><rect x="2664" y="939.9" width="24" height="107.7" fill="#e9e8eb"/><rect x="2664" y="939.9" width="24" height="4" fill="#c5e690"/><rect x="2692" y="941.8" width="24" height="105.8" fill="#e9e8eb"/><rect x="2692" y="941.8" width="24" height="4" fill="#b2df6a"/><rect x="2720" y="931.7" width="24" height="115.9" fill="#e9e8eb"/><rect x="2720" y="931.7" width="24" height="4" fill="#c5e690"/><rect x="2748" y="941.8" width="24" height="105.8" fill="#e9e8eb"/><rect x="2748" y="941.8" width="24" height="4" fill="#74d39a"/><rect x="2776" y="937.7" width="24" height="109.9" fill="#e9e8eb"/><rect x="2776" y="937.7" width="24" height="4" fill="#8ad9a8"/><rect x="2804" y="939.9" width="24" height="107.7" fill="#e9e8eb"/><rect x="2804" y="939.9" width="24" height="4" fill="#8ad9a8"/><rect x="2832" y="941.8" width="24" height="105.8" fill="#e9e8eb"/><rect x="2832" y="941.8" width="24" height="4" fill="#74d39a"/><rect x="2860" y="941.8" width="24" height="105.8" fill="#e9e8eb"/><rect x="2860" y="941.8" width="24" height="4" fill="#74d39a"/><rect x="2888" y="937.7" width="24" height="109.9" fill="#e9e8eb"/><rect x="2888" y="937.7" width="24" height="4" fill="#8ad9a8"/><rect x="2916" y="939.9" width="24" height="107.7" fill="#e9e8eb"/><rect x="2916" y="939.9" width="24" height="4" fill="#8ad9a8"/><rect x="2944" y="937.7" width="24" height="109.9" fill="#e9e8eb"/><rect x="2944" y="937.7" width="24" height="4" fill="#8ad9a8"/><rect x="2972" y="941.8" width="24" height="105.8" fill="#e9e8eb"/><rect x="2972" y="941.8" width="24" height="4" fill="#74d39a"/><rect x="3000" y="933.9" width="24" height="113.7" fill="#e9e8eb"/><rect x="3000" y="933.9" width="24" height="4" fill="#8ad9a8"/><rect x="3028" y="931.7" width="24" height="115.9" fill="#e9e8eb"/><rect x="3028" y="931.7" width="24" height="4" fill="#8ad9a8"/><rect x="3056" y="939.9" width="24" height="107.7" fill="#e9e8eb"/><rect x="3056" y="939.9" width="24" height="4" fill="#8ad9a8"/><rect x="3084" y="935.8" width="24" height="111.8" fill="#e9e8eb"/><rect x="3084" y="935.8" width="24" height="4" fill="#2c6e80"/><rect x="3112" y="944.0" width="24" height="103.6" fill="#e9e8eb"/><rect x="3112" y="944.0" width="24" height="4" fill="#8577cc"/></g><rect x="856" y="1046.6" width="2268" height="2" fill="#000" fill-opacity="0.10"/><rect x="856" y="958.6" width="2268" height="2" fill="#000" fill-opacity="0.10"/><rect x="856" y="870.6" width="2268" height="2" fill="#000" fill-opacity="0.10"/><rect x="856" y="782.6" width="2268" height="2" fill="#000" fill-opacity="0.10"/><rect x="856" y="694.6" width="2268" height="2" fill="#000" fill-opacity="0.10"/></svg>
<div class="t" style="left:795.65px;top:1037.56px;font-size:23.2px;line-height:23.2px;font-weight:400;color:#737577;">0ms</div>
<div class="t" style="left:814.91px;top:949.56px;font-size:23.2px;line-height:23.2px;font-weight:400;color:#737577;">1s</div>
<div class="t" style="left:814.91px;top:861.56px;font-size:23.2px;line-height:23.2px;font-weight:400;color:#737577;">2s</div>
<div class="t" style="left:814.91px;top:773.56px;font-size:23.2px;line-height:23.2px;font-weight:400;color:#737577;">3s</div>
<div class="t" style="left:814.91px;top:685.56px;font-size:23.2px;line-height:23.2px;font-weight:400;color:#737577;">4s</div>
<div class="t" style="left:934.42px;top:1066.96px;font-size:24.85px;line-height:24.85px;font-weight:400;color:#1f2326;">13 Feb 19 11:45</div>
<div class="t" style="left:1215.78px;top:1066.96px;font-size:24.85px;line-height:24.85px;font-weight:400;color:#1f2326;">17 Jun 19 23:11</div>
<div class="t" style="left:1495.53px;top:1066.96px;font-size:24.85px;line-height:24.85px;font-weight:400;color:#1f2326;">25 Oct 19 21:39</div>
<div class="t" style="left:1790.82px;top:1066.96px;font-size:24.85px;line-height:24.85px;font-weight:400;color:#1f2326;">15 Feb 01:03</div>
<div class="t" style="left:2069.70px;top:1066.96px;font-size:24.85px;line-height:24.85px;font-weight:400;color:#1f2326;">11 May 13:37</div>
<div class="t" style="left:2350.07px;top:1066.96px;font-size:24.85px;line-height:24.85px;font-weight:400;color:#1f2326;">19 Sep 16:22</div>
<div class="t" style="left:2639.76px;top:1066.96px;font-size:24.85px;line-height:24.85px;font-weight:400;color:#1f2326;">6 Oct 13:59</div>
<div class="t" style="left:2912.80px;top:1066.96px;font-size:24.85px;line-height:24.85px;font-weight:400;color:#1f2326;">29 Oct 21:53</div>
<div style="position:absolute;left:728px;top:1130px;width:28px;height:28px;box-sizing:border-box;border:2px solid #bcd1e5;border-radius:5px;background:#fff"></div>
<div class="t" style="left:772.00px;top:1131.84px;font-size:26.77px;line-height:26.77px;font-weight:400;color:#1f2326;">Adapt scale</div>
<div style="position:absolute;left:2766px;top:1130px;width:28px;height:28px;box-sizing:border-box;border:2px solid #bcd1e5;border-radius:5px;background:#fff"></div>
<div class="t" style="left:2810.00px;top:1132.48px;font-size:26.01px;line-height:26.01px;font-weight:400;color:#1f2326;">Average</div>
<div style="position:absolute;left:2932px;top:1122px;width:192px;height:48px;box-sizing:border-box;border:2px solid #bdd2e6;border-radius:6px;background:#fff"></div>
<div class="t" style="left:2964.00px;top:1133.29px;font-size:25.06px;line-height:25.06px;font-weight:400;color:#1f2326;">All agents</div>
<svg style="position:absolute;left:3077px;top:1138px" width="18" height="14" viewBox="0 0 18 14"><path d="M3 4 L9 10 L15 4" fill="none" stroke="#8f9092" stroke-width="2"/></svg>
<div class="t" style="left:728.80px;top:1241.28px;font-size:26.84px;line-height:26.84px;font-weight:700;color:#1f2326;">History</div>
<div class="t" style="left:727.90px;top:1298.26px;font-size:25.09px;line-height:25.09px;font-weight:400;color:#737577;">Status</div>
<div class="t" style="left:1003.21px;top:1298.23px;font-size:25.13px;line-height:25.13px;font-weight:400;color:#737577;">Duration</div>
<div class="t" style="left:1132.00px;top:1298.64px;font-size:24.64px;line-height:24.64px;font-weight:400;color:#737577;">Build</div>
<div class="t" style="left:2319.00px;top:1298.66px;font-size:24.62px;line-height:24.62px;font-weight:400;color:#737577;">Changes</div>
<div class="t" style="left:2611.50px;top:1298.50px;font-size:24.81px;line-height:24.81px;font-weight:400;color:#737577;">Agent</div>
<div class="t" style="left:3040.00px;top:1297.81px;font-size:25.62px;line-height:25.62px;font-weight:400;color:#737577;">Started</div>
<svg style="position:absolute;left:3015px;top:1300px" width="22" height="18" viewBox="0 0 22 18"><path d="M3 4 L11 12 L19 4" fill="none" stroke="#737577" stroke-width="2.8"/></svg>
<div style="position:absolute;left:728px;top:1346px;width:2396px;height:2px;background:#e4e5e7"></div>
<div class="t" style="left:727.90px;top:1370.43px;font-size:26.43px;line-height:26.43px;font-weight:400;color:#1f8a3c;">Success</div>
<div class="t" style="left:977.98px;top:1369.35px;font-size:27.7px;line-height:27.7px;font-weight:400;color:#1f2326;">1s:132ms</div>
<div style="position:absolute;left:1132px;top:1365px;width:160px;height:40px;background:#daecfc;border-radius:6px"></div>
<div class="t" style="left:1147.86px;top:1370.63px;font-size:26.19px;line-height:26.19px;font-weight:400;color:#1567aa;">whiterabbit</div>
<div class="t" style="left:1308.30px;top:1375.03px;font-size:22.41px;line-height:22.41px;font-weight:400;color:#1f2326;">...</div>
<div class="t" style="left:1336.30px;top:1370.72px;font-size:27.5px;line-height:27.5px;font-weight:400;color:#6b6e71;">/</div>
<div class="t" style="left:1354.90px;top:1370.27px;font-size:28.03px;line-height:28.03px;font-weight:400;color:#1f2326;">dotnet-listeners</div>
<div class="t" style="left:1558.50px;top:1370.72px;font-size:27.5px;line-height:27.5px;font-weight:400;color:#6b6e71;">/</div>
<div class="t" style="left:1575.00px;top:1369.16px;font-size:29.34px;line-height:29.34px;font-weight:400;color:#1f2326;">#2020.2.733.0</div>
<svg style="position:absolute;left:1779.5px;top:1370px" width="30" height="30" viewBox="0 0 30 30"><circle cx="14.5" cy="14.5" r="12.7" fill="none" stroke="#5aa86a" stroke-width="2.5"/><path d="M6.7 13.2 L13.7 20.4 L25 6.8" fill="none" stroke="#5aa86a" stroke-width="3"/></svg>
<div class="t" style="left:1816.10px;top:1370.69px;font-size:27.54px;line-height:27.54px;font-weight:400;color:#1f8a3c;">Tests passed: 744, ignored: 8</div>
<div class="t" style="left:2319.00px;top:1370.05px;font-size:26.87px;line-height:26.87px;font-weight:400;color:#737577;">No changes</div>
<svg style="position:absolute;left:2614px;top:1369px" width="28" height="28" viewBox="0 0 28 28"><path d="M0 3.2 L12 1.8 V12.6 H0 Z M14.3 1.5 L28 0 V12.6 H14.3 Z M0 15 H12 V25.8 L0 24.2 Z M14.3 15 H28 V27.8 L14.3 26.1 Z" fill="#3d3d40"/></svg>
<div class="t" style="left:2651.50px;top:1368.84px;font-size:28.3px;line-height:28.3px;font-weight:400;color:#1567aa;">teamcity-... 40-48</div>
<div class="t" style="left:2955.48px;top:1369.04px;font-size:28.07px;line-height:28.07px;font-weight:400;color:#1f2326;">10 Nov 20:00</div>
<div class="t" style="left:727.90px;top:1436.28px;font-size:26.43px;line-height:26.43px;font-weight:400;color:#1f8a3c;">Success</div>
<div class="t" style="left:977.98px;top:1435.20px;font-size:27.7px;line-height:27.7px;font-weight:400;color:#1f2326;">1s:228ms</div>
<div style="position:absolute;left:1132px;top:1431px;width:110px;height:40px;background:#8fc9f9;border-radius:6px"></div>
<div class="t" style="left:1147.60px;top:1437.38px;font-size:25.13px;line-height:25.13px;font-weight:400;color:#1f2326;">master</div>
<div class="t" style="left:1258.80px;top:1440.88px;font-size:22.41px;line-height:22.41px;font-weight:400;color:#1f2326;">...</div>
<div class="t" style="left:1286.80px;top:1436.57px;font-size:27.5px;line-height:27.5px;font-weight:400;color:#6b6e71;">/</div>
<div class="t" style="left:1305.40px;top:1436.12px;font-size:28.03px;line-height:28.03px;font-weight:400;color:#1f2326;">dotnet-listeners</div>
<div class="t" style="left:1509.00px;top:1436.57px;font-size:27.5px;line-height:27.5px;font-weight:400;color:#6b6e71;">/</div>
<div class="t" style="left:1525.50px;top:1435.01px;font-size:29.34px;line-height:29.34px;font-weight:400;color:#1f2326;">#2020.2.727.0</div>
<svg style="position:absolute;left:1730px;top:1436px" width="30" height="30" viewBox="0 0 30 30"><circle cx="14.5" cy="14.5" r="12.7" fill="none" stroke="#5aa86a" stroke-width="2.5"/><path d="M6.7 13.2 L13.7 20.4 L25 6.8" fill="none" stroke="#5aa86a" stroke-width="3"/></svg>
<div class="t" style="left:1766.60px;top:1436.54px;font-size:27.54px;line-height:27.54px;font-weight:400;color:#1f8a3c;">Tests passed: 741, ignored: 8, muted: 3</div>
<div class="t" style="left:2319.00px;top:1435.90px;font-size:26.87px;line-height:26.87px;font-weight:400;color:#737577;">No changes</div>
<svg style="position:absolute;left:2614px;top:1435px" width="28" height="28" viewBox="0 0 28 28"><path d="M0 3.2 L12 1.8 V12.6 H0 Z M14.3 1.5 L28 0 V12.6 H14.3 Z M0 15 H12 V25.8 L0 24.2 Z M14.3 15 H28 V27.8 L14.3 26.1 Z" fill="#3d3d40"/></svg>
<div class="t" style="left:2651.50px;top:1436.76px;font-size:25.86px;line-height:25.86px;font-weight:400;color:#1567aa;">WIN-7PT... OSE6P</div>
<div class="t" style="left:2955.48px;top:1434.89px;font-size:28.07px;line-height:28.07px;font-weight:400;color:#1f2326;">10 Nov 18:14</div>
<div class="t" style="left:727.90px;top:1502.13px;font-size:26.43px;line-height:26.43px;font-weight:400;color:#1f8a3c;">Success</div>
<div class="t" style="left:977.98px;top:1501.05px;font-size:27.7px;line-height:27.7px;font-weight:400;color:#1f2326;">1s:183ms</div>
<div style="position:absolute;left:1132px;top:1496px;width:110px;height:40px;background:#8fc9f9;border-radius:6px"></div>
<div class="t" style="left:1147.60px;top:1503.23px;font-size:25.13px;line-height:25.13px;font-weight:400;color:#1f2326;">master</div>
<div class="t" style="left:1258.80px;top:1506.73px;font-size:22.41px;line-height:22.41px;font-weight:400;color:#1f2326;">...</div>
<div class="t" style="left:1286.80px;top:1502.42px;font-size:27.5px;line-height:27.5px;font-weight:400;color:#6b6e71;">/</div>
<div class="t" style="left:1305.40px;top:1501.97px;font-size:28.03px;line-height:28.03px;font-weight:400;color:#1f2326;">dotnet-listeners</div>
<div class="t" style="left:1509.00px;top:1502.42px;font-size:27.5px;line-height:27.5px;font-weight:400;color:#6b6e71;">/</div>
<div class="t" style="left:1525.50px;top:1500.86px;font-size:29.34px;line-height:29.34px;font-weight:400;color:#1f2326;">#2020.2.724.0</div>
<svg style="position:absolute;left:1730px;top:1502px" width="30" height="30" viewBox="0 0 30 30"><circle cx="14.5" cy="14.5" r="12.7" fill="none" stroke="#5aa86a" stroke-width="2.5"/><path d="M6.7 13.2 L13.7 20.4 L25 6.8" fill="none" stroke="#5aa86a" stroke-width="3"/></svg>
<div class="t" style="left:1766.60px;top:1502.39px;font-size:27.54px;line-height:27.54px;font-weight:400;color:#1f8a3c;">Tests passed: 744, ignored: 8</div>
<div class="t" style="left:2319.00px;top:1501.75px;font-size:26.87px;line-height:26.87px;font-weight:400;color:#737577;">No changes</div>
<svg style="position:absolute;left:2614px;top:1501px" width="28" height="28" viewBox="0 0 28 28"><path d="M0 3.2 L12 1.8 V12.6 H0 Z M14.3 1.5 L28 0 V12.6 H14.3 Z M0 15 H12 V25.8 L0 24.2 Z M14.3 15 H28 V27.8 L14.3 26.1 Z" fill="#3d3d40"/></svg>
<div class="t" style="left:2651.50px;top:1500.54px;font-size:28.3px;line-height:28.3px;font-weight:400;color:#1567aa;">teamcity-... 40-47</div>
<div class="t" style="left:2971.20px;top:1500.74px;font-size:28.07px;line-height:28.07px;font-weight:400;color:#1f2326;">4 Nov 01:02</div>
<div class="t" style="left:727.90px;top:1567.98px;font-size:26.43px;line-height:26.43px;font-weight:400;color:#1f8a3c;">Success</div>
<div class="t" style="left:977.98px;top:1566.90px;font-size:27.7px;line-height:27.7px;font-weight:400;color:#1f2326;">1s:274ms</div>
<div style="position:absolute;left:1132px;top:1562px;width:160px;height:40px;background:#daecfc;border-radius:6px"></div>
<div class="t" style="left:1147.86px;top:1568.18px;font-size:26.19px;line-height:26.19px;font-weight:400;color:#1567aa;">whiterabbit</div>
<div class="t" style="left:1308.30px;top:1572.58px;font-size:22.41px;line-height:22.41px;font-weight:400;color:#1f2326;">...</div>
<div class="t" style="left:1336.30px;top:1568.27px;font-size:27.5px;line-height:27.5px;font-weight:400;color:#6b6e71;">/</div>
<div class="t" style="left:1354.90px;top:1567.82px;font-size:28.03px;line-height:28.03px;font-weight:400;color:#1f2326;">dotnet-listeners</div>
<div class="t" style="left:1558.50px;top:1568.27px;font-size:27.5px;line-height:27.5px;font-weight:400;color:#6b6e71;">/</div>
<div class="t" style="left:1575.00px;top:1566.71px;font-size:29.34px;line-height:29.34px;font-weight:400;color:#1f2326;">#2020.2.723.0</div>
<svg style="position:absolute;left:1779.5px;top:1568px" width="30" height="30" viewBox="0 0 30 30"><circle cx="14.5" cy="14.5" r="12.7" fill="none" stroke="#5aa86a" stroke-width="2.5"/><path d="M6.7 13.2 L13.7 20.4 L25 6.8" fill="none" stroke="#5aa86a" stroke-width="3"/></svg>
<div class="t" style="left:1816.10px;top:1568.24px;font-size:27.54px;line-height:27.54px;font-weight:400;color:#1f8a3c;">Tests passed: 744, ignored: 8</div>
<div class="t" style="left:2319.00px;top:1567.60px;font-size:26.87px;line-height:26.87px;font-weight:400;color:#737577;">No changes</div>
<svg style="position:absolute;left:2614px;top:1567px" width="28" height="28" viewBox="0 0 28 28"><path d="M0 3.2 L12 1.8 V12.6 H0 Z M14.3 1.5 L28 0 V12.6 H14.3 Z M0 15 H12 V25.8 L0 24.2 Z M14.3 15 H28 V27.8 L14.3 26.1 Z" fill="#3d3d40"/></svg>
<div class="t" style="left:2651.50px;top:1566.39px;font-size:28.3px;line-height:28.3px;font-weight:400;color:#1567aa;">teamcity-... 40-47</div>
<div class="t" style="left:2971.20px;top:1566.59px;font-size:28.07px;line-height:28.07px;font-weight:400;color:#1f2326;">3 Nov 19:47</div>
<div class="t" style="left:727.90px;top:1633.83px;font-size:26.43px;line-height:26.43px;font-weight:400;color:#1f8a3c;">Success</div>
<div class="t" style="left:977.98px;top:1632.75px;font-size:27.7px;line-height:27.7px;font-weight:400;color:#1f2326;">1s:248ms</div>
<div style="position:absolute;left:1132px;top:1628px;width:110px;height:40px;background:#8fc9f9;border-radius:6px"></div>
<div class="t" style="left:1147.60px;top:1634.93px;font-size:25.13px;line-height:25.13px;font-weight:400;color:#1f2326;">master</div>
<div class="t" style="left:1258.80px;top:1638.43px;font-size:22.41px;line-height:22.41px;font-weight:400;color:#1f2326;">...</div>
<div class="t" style="left:1286.80px;top:1634.12px;font-size:27.5px;line-height:27.5px;font-weight:400;color:#6b6e71;">/</div>
<div class="t" style="left:1305.40px;top:1633.67px;font-size:28.03px;line-height:28.03px;font-weight:400;color:#1f2326;">dotnet-listeners</div>
<div class="t" style="left:1509.00px;top:1634.12px;font-size:27.5px;line-height:27.5px;font-weight:400;color:#6b6e71;">/</div>
<div class="t" style="left:1525.50px;top:1632.56px;font-size:29.34px;line-height:29.34px;font-weight:400;color:#1f2326;">#2020.2.722.0</div>
<svg style="position:absolute;left:1730px;top:1634px" width="30" height="30" viewBox="0 0 30 30"><circle cx="14.5" cy="14.5" r="12.7" fill="none" stroke="#5aa86a" stroke-width="2.5"/><path d="M6.7 13.2 L13.7 20.4 L25 6.8" fill="none" stroke="#5aa86a" stroke-width="3"/></svg>
<div class="t" style="left:1766.60px;top:1634.09px;font-size:27.54px;line-height:27.54px;font-weight:400;color:#1f8a3c;">Tests passed: 744, ignored: 8</div>
<div class="t" style="left:2319.00px;top:1633.45px;font-size:26.87px;line-height:26.87px;font-weight:400;color:#737577;">No changes</div>
<svg style="position:absolute;left:2614px;top:1633px" width="28" height="28" viewBox="0 0 28 28"><path d="M0 3.2 L12 1.8 V12.6 H0 Z M14.3 1.5 L28 0 V12.6 H14.3 Z M0 15 H12 V25.8 L0 24.2 Z M14.3 15 H28 V27.8 L14.3 26.1 Z" fill="#3d3d40"/></svg>
<div class="t" style="left:2651.50px;top:1632.24px;font-size:28.3px;line-height:28.3px;font-weight:400;color:#1567aa;">teamcity-... 40-47</div>
<div class="t" style="left:2961.66px;top:1632.44px;font-size:28.07px;line-height:28.07px;font-weight:400;color:#1f2326;">30 Oct 14:10</div>
</body></html>
